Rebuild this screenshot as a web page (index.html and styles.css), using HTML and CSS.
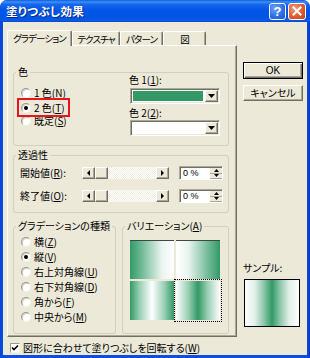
FILE: index.html
```html
<!DOCTYPE html>
<html lang="ja">
<head>
<meta charset="utf-8">
<title>塗りつぶし効果</title>
<link rel="stylesheet" href="styles.css">
</head>
<body>
<div class="window">
  <div class="titlebar">
    <span class="title">塗りつぶし効果</span>
    <div class="tb-buttons">
      <span class="tb-btn help">?</span>
      <span class="tb-btn close"><svg width="10" height="10" viewBox="0 0 10 10"><path d="M1.5 1.5 L8.5 8.5 M8.5 1.5 L1.5 8.5" stroke="#fff" stroke-width="2" stroke-linecap="square"/></svg></span>
    </div>
  </div>
  <div class="client">
    <div class="main">
      <div class="tabs">
        <div class="tab active w1">グラデーション</div>
        <div class="tab w2">テクスチャ</div>
        <div class="tab w3">パターン</div>
        <div class="tab w3">図</div>
      </div>
      <div class="panel">
        <div class="group g-color">
          <div class="legend">色</div>
          <div class="color-body">
            <div class="radios">
              <div class="radio-item"><span class="radio"></span><span>1 色(<u>N</u>)</span></div>
              <div class="radio-item marked"><span class="radio on"></span><span>2 色(<u>T</u>)</span></div>
              <div class="radio-item"><span class="radio"></span><span>既定(<u>S</u>)</span></div>
            </div>
            <div class="pickers">
              <div class="plabel l1">色 1(<u>1</u>):</div>
              <div class="dropdown d1">
                <span class="swatch green"></span>
                <span class="dd-btn"><svg width="7" height="4" viewBox="0 0 7 4"><path d="M0 0 H7 L3.5 4 Z" fill="#000"/></svg></span>
              </div>
              <div class="plabel l2">色 2(<u>2</u>):</div>
              <div class="dropdown d2">
                <span class="swatch white"></span>
                <span class="dd-btn"><svg width="7" height="4" viewBox="0 0 7 4"><path d="M0 0 H7 L3.5 4 Z" fill="#000"/></svg></span>
              </div>
            </div>
          </div>
        </div>

        <div class="group g-trans">
          <div class="legend">透過性</div>
          <div class="trow r1">
            <span class="tlabel">開始値(<u>R</u>):</span>
            <div class="scrollbar">
              <span class="sb-btn"><svg width="3" height="6" viewBox="0 0 3 6"><path d="M3 0 V6 L0 3 Z" fill="#000"/></svg></span>
              <span class="sb-thumb"></span>
              <span class="sb-track"></span>
              <span class="sb-btn"><svg width="3" height="6" viewBox="0 0 3 6"><path d="M0 0 V6 L3 3 Z" fill="#000"/></svg></span>
            </div>
            <div class="spin-edit">
              <span class="edit-text">0 %</span>
              <span class="spin">
                <span class="spin-btn"><svg width="5" height="3" viewBox="0 0 5 3"><path d="M0 3 H5 L2.5 0 Z" fill="#000"/></svg></span>
                <span class="spin-btn"><svg width="5" height="3" viewBox="0 0 5 3"><path d="M0 0 H5 L2.5 3 Z" fill="#000"/></svg></span>
              </span>
            </div>
          </div>
          <div class="trow r2">
            <span class="tlabel">終了値(<u>O</u>):</span>
            <div class="scrollbar">
              <span class="sb-btn"><svg width="3" height="6" viewBox="0 0 3 6"><path d="M3 0 V6 L0 3 Z" fill="#000"/></svg></span>
              <span class="sb-thumb"></span>
              <span class="sb-track"></span>
              <span class="sb-btn"><svg width="3" height="6" viewBox="0 0 3 6"><path d="M0 0 V6 L3 3 Z" fill="#000"/></svg></span>
            </div>
            <div class="spin-edit">
              <span class="edit-text">0 %</span>
              <span class="spin">
                <span class="spin-btn"><svg width="5" height="3" viewBox="0 0 5 3"><path d="M0 3 H5 L2.5 0 Z" fill="#000"/></svg></span>
                <span class="spin-btn"><svg width="5" height="3" viewBox="0 0 5 3"><path d="M0 0 H5 L2.5 3 Z" fill="#000"/></svg></span>
              </span>
            </div>
          </div>
        </div>

        <div class="bottom-row">
          <div class="group g-type">
            <div class="legend">グラデーションの種類</div>
            <div class="type-list">
              <div class="radio-item"><span class="radio"></span><span>横(<u>Z</u>)</span></div>
              <div class="radio-item"><span class="radio on"></span><span>縦(<u>V</u>)</span></div>
              <div class="radio-item"><span class="radio"></span><span>右上対角線(<u>U</u>)</span></div>
              <div class="radio-item"><span class="radio"></span><span>右下対角線(<u>D</u>)</span></div>
              <div class="radio-item"><span class="radio"></span><span>角から(<u>F</u>)</span></div>
              <div class="radio-item"><span class="radio"></span><span>中央から(<u>M</u>)</span></div>
            </div>
          </div>
          <div class="group g-var">
            <div class="legend">バリエーション(<u>A</u>)</div>
            <div class="tiles">
              <span class="tile t1"></span>
              <span class="tile t2"></span>
              <span class="tile t3"></span>
              <span class="tile t4 selected"></span>
            </div>
          </div>
        </div>
      </div>
      <div class="rotate">
        <span class="check"><svg width="8" height="8" viewBox="0 0 8 8"><path d="M1 3.5 L3 5.5 L7 1.5" fill="none" stroke="#000" stroke-width="1.6"/></svg></span>
        <span>図形に合わせて塗りつぶしを回転する(<u>W</u>)</span>
      </div>
    </div>
    <div class="side">
      <div class="btn default">OK</div>
      <div class="btn cancel">キャンセル</div>
      <div class="sample-label">サンプル:</div>
      <div class="sample"></div>
    </div>
  </div>
</div>
</body>
</html>
```

FILE: styles.css
```css
html, body {
  margin: 0;
  padding: 0;
  background: #ffffff;
}
body {
  font-family: "Noto Sans CJK JP", "Noto Sans", sans-serif;
  font-size: 10px;
  font-feature-settings: "palt" 1;
  color: #000;
}
u { text-decoration: underline; text-underline-offset: 1px; }

.window {
  width: 310px;
  height: 358px;
  display: flex;
  flex-direction: column;
  background: linear-gradient(90deg, #0845D8 0, #0A4FE0 3px, #0A4FE0 307px, #0633C8 310px);
  border-radius: 7px 7px 0 0;
  overflow: hidden;
}

.titlebar {
  flex: 0 0 22px;
  display: flex;
  align-items: center;
  justify-content: space-between;
  padding: 0 4px 0 6px;
  background: linear-gradient(180deg, #0A5FE0 0%, #3D8FF6 9%, #1866EC 20%, #0056E6 45%, #0055E4 80%, #0A5AE8 92%, #0649D0 100%);
  border-radius: 7px 7px 0 0;
}
.title {
  color: #fff;
  font-weight: bold;
  font-size: 11.5px;
  letter-spacing: 0.3px;
  text-shadow: 1px 1px 0 #0A2A8A;
}
.tb-buttons {
  display: flex;
  gap: 2px;
  align-items: center;
}
.tb-btn {
  width: 15px;
  height: 15px;
  border: 1px solid #fff;
  border-radius: 3px;
  display: flex;
  align-items: center;
  justify-content: center;
  color: #fff;
  font-family: "Liberation Sans", sans-serif;
  font-weight: bold;
  font-size: 13px;
  line-height: 1;
}
.help {
  background: radial-gradient(circle at 35% 30%, #6FA2F8 0%, #2F6FEA 55%, #1B52D0 100%);
}
.close {
  width: 16px;
  background: radial-gradient(circle at 35% 30%, #F39B7A 0%, #E05A30 55%, #C6401A 100%);
}

.client {
  flex: 1;
  margin: 0 3px 3px;
  background: #ECE9D8;
  display: flex;
}

.main {
  width: 230px;
  margin-left: 4px;
  padding-top: 8px;
  display: flex;
  flex-direction: column;
}

.tabs {
  display: flex;
  align-items: flex-end;
  height: 16px;
  margin-bottom: -1px;
}
.tab {
  box-sizing: border-box;
  height: 14px;
  margin-bottom: 1px;
  display: flex;
  align-items: center;
  justify-content: center;
  background: #ECE9D8;
  border-top: 1px solid #fff;
  border-left: 1px solid #fff;
  border-right: 1px solid #716F64;
  box-shadow: inset -1px 0 #ACA899;
  border-radius: 2px 2px 0 0;
  line-height: 12px;
  font-size: 9.5px;
  letter-spacing: -0.9px;
  white-space: nowrap;
  overflow: hidden;
}
.tab.active {
  position: relative;
  z-index: 1;
  height: 16px;
  margin-bottom: 0;
  padding-bottom: 1px;
}
.w1 { width: 65px; }
.w2 { width: 48px; }
.w3 { width: 43px; }

.panel {
  box-sizing: border-box;
  height: 292px;
  border-top: 1px solid #fff;
  border-left: 1px solid #fff;
  border-right: 1px solid #716F64;
  border-bottom: 1px solid #716F64;
  box-shadow: inset -1px -1px #ACA899;
  padding: 26px 0 0 5px;
}

.group {
  box-sizing: border-box;
  width: 216px;
  border: 1px solid #D0D0BF;
  border-radius: 3px;
}
.legend {
  width: fit-content;
  margin: -7px 0 -5px 2px;
  padding: 0 2px;
  line-height: 12px;
  background: #ECE9D8;
}

.g-color { height: 74px; }
.color-body { display: flex; }
.radios {
  box-sizing: border-box;
  width: 115px;
  padding: 13px 0 0 7px;
}
.radio-item {
  display: flex;
  align-items: center;
  gap: 3px;
  height: 14px;
  line-height: 12px;
  width: fit-content;
}
.radio {
  box-sizing: border-box;
  width: 10px;
  height: 10px;
  border-radius: 50%;
  background: #fff;
  border: 1px solid;
  border-color: #9C9A8C #F2F1EA #F2F1EA #9C9A8C;
  box-shadow: inset 1px 1px 0 #D4D0C8;
  display: flex;
  align-items: center;
  justify-content: center;
}
.radio.on::after {
  content: "";
  width: 4px;
  height: 4px;
  border-radius: 50%;
  background: #000;
}
.radio-item.marked {
  outline: 2px solid #E8161B;
  outline-offset: 0;
  margin-left: -2px;
  padding: 0 3px 0 2px;
  box-sizing: border-box;
  height: 15px;
  margin-top: 0;
  margin-bottom: -1px;
}

.pickers { width: 90px; }
.plabel { line-height: 12px; }
.l1 { margin-top: 1px; }
.l2 { margin-top: 3px; }
.dropdown {
  box-sizing: border-box;
  width: 90px;
  height: 16px;
  margin-left: 1px;
  border: 1px solid;
  border-color: #ACA899 #fff #fff #ACA899;
  box-shadow: inset 1px 1px #716F64, inset -1px -1px #ECE9D8;
  padding: 1px;
  background: #fff;
  display: flex;
}
.d1 { margin-top: 2px; }
.d2 { margin-top: 1px; }
.swatch {
  flex: 1;
  margin: 1px 2px 1px 1px;
}
.swatch.green { background: #339966; }
.swatch.white { background: #fff; }
.dd-btn {
  box-sizing: border-box;
  width: 13px;
  display: flex;
  align-items: center;
  justify-content: center;
  background: #ECE9D8;
  border: 1px solid;
  border-color: #fff #716F64 #716F64 #fff;
  box-shadow: inset -1px -1px #ACA899;
}

.g-trans {
  height: 58px;
  margin-top: 9px;
}
.trow {
  display: flex;
  align-items: center;
  height: 16px;
  padding-left: 6px;
}
.r1 { margin-top: 9px; }
.r2 { margin-top: 7px; }
.tlabel {
  width: 62px;
  line-height: 12px;
}
.scrollbar {
  width: 87px;
  height: 12px;
  display: flex;
}
.sb-btn, .sb-thumb {
  box-sizing: border-box;
  width: 13px;
  height: 12px;
  background: #ECE9D8;
  border: 1px solid;
  border-color: #fff #716F64 #716F64 #fff;
  box-shadow: inset -1px -1px #ACA899;
  display: flex;
  align-items: center;
  justify-content: center;
}
.sb-track {
  flex: 1;
  background-color: #F5F4EC;
  background-image: repeating-conic-gradient(#EFEDE0 0 25%, #FFFFFF 0 50%);
  background-size: 2px 2px;
}
.spin-edit {
  box-sizing: border-box;
  width: 44px;
  height: 14px;
  margin-left: 10px;
  border: 1px solid;
  border-color: #ACA899 #fff #fff #ACA899;
  box-shadow: inset 1px 1px #716F64;
  background: #fff;
  display: flex;
  padding: 1px 0 0 1px;
}
.edit-text {
  flex: 1;
  line-height: 11px;
  padding-left: 2px;
  font-family: "Liberation Sans", sans-serif;
  font-size: 9px;
}
.spin {
  width: 12px;
  display: flex;
  flex-direction: column;
}
.spin-btn {
  flex: 1;
  background: #ECE9D8;
  display: flex;
  align-items: center;
  justify-content: center;
  border-bottom: 1px solid #ACA899;
}

.bottom-row {
  display: flex;
  gap: 6px;
  margin-top: 13px;
}
.g-type {
  width: 103px;
  height: 108px;
}
.type-list {
  padding: 7px 0 0 7px;
}
.type-list .radio-item { height: 15px; }
.g-var {
  width: 107px;
  height: 108px;
}
.tiles {
  display: grid;
  grid-template-columns: 44px 44px;
  grid-auto-rows: 39px;
  gap: 2px;
  padding: 13px 0 0 7px;
}
.tile { display: block; }
.t1 { background: linear-gradient(90deg, #339966 0%, #6DB894 25%, #E9F4EF 72%, #ffffff 100%); border-top: 1px solid #3C4A42; }
.t2 { background: linear-gradient(90deg, #ffffff 0%, #E9F4EF 28%, #6DB894 75%, #339966 100%); border-top: 1px solid #3C4A42; }
.t3 { background: linear-gradient(90deg, #339966 0%, #9ACFB5 22%, #ffffff 50%, #9ACFB5 78%, #339966 100%); }
.t4 { background: linear-gradient(90deg, #ffffff 0%, #9ACFB5 28%, #339966 50%, #9ACFB5 72%, #ffffff 100%); }
.tile.selected {
  outline: 1px dotted #000;
  outline-offset: 1px;
}

.rotate {
  display: flex;
  align-items: center;
  gap: 3px;
  height: 12px;
  margin-top: 5px;
  padding-left: 3px;
  line-height: 12px;
}
.check {
  box-sizing: border-box;
  width: 10px;
  height: 10px;
  background: #fff;
  border: 1px solid;
  border-color: #9C9A8C #F2F1EA #F2F1EA #9C9A8C;
  display: flex;
  align-items: center;
  justify-content: center;
}

.side {
  width: 60px;
  margin-left: 6px;
  padding-top: 40px;
  display: flex;
  flex-direction: column;
}
.btn {
  box-sizing: border-box;
  height: 17px;
  display: flex;
  align-items: center;
  justify-content: center;
  background: #ECE9D8;
  line-height: 12px;
}
.btn.default {
  border: 1px solid #000;
  box-shadow: inset 1px 1px #fff, inset -1px -1px #716F64, inset -2px -2px #ACA899;
  font-family: "Liberation Sans", sans-serif;
  font-size: 10px;
}
.btn.cancel {
  height: 16px;
  margin-top: 6px;
  border: 1px solid;
  border-color: #fff #716F64 #716F64 #fff;
  box-shadow: inset -1px -1px #ACA899;
}
.sample-label {
  margin-top: 161px;
  line-height: 12px;
}
.sample {
  box-sizing: border-box;
  width: 56px;
  height: 48px;
  margin: 5px 0 0 1px;
  border: 1px solid #000;
  background: linear-gradient(90deg, #ffffff 0%, #E2F0E9 18%, #8CC7AA 35%, #339966 50%, #8CC7AA 65%, #E2F0E9 82%, #ffffff 100%);
}
```
